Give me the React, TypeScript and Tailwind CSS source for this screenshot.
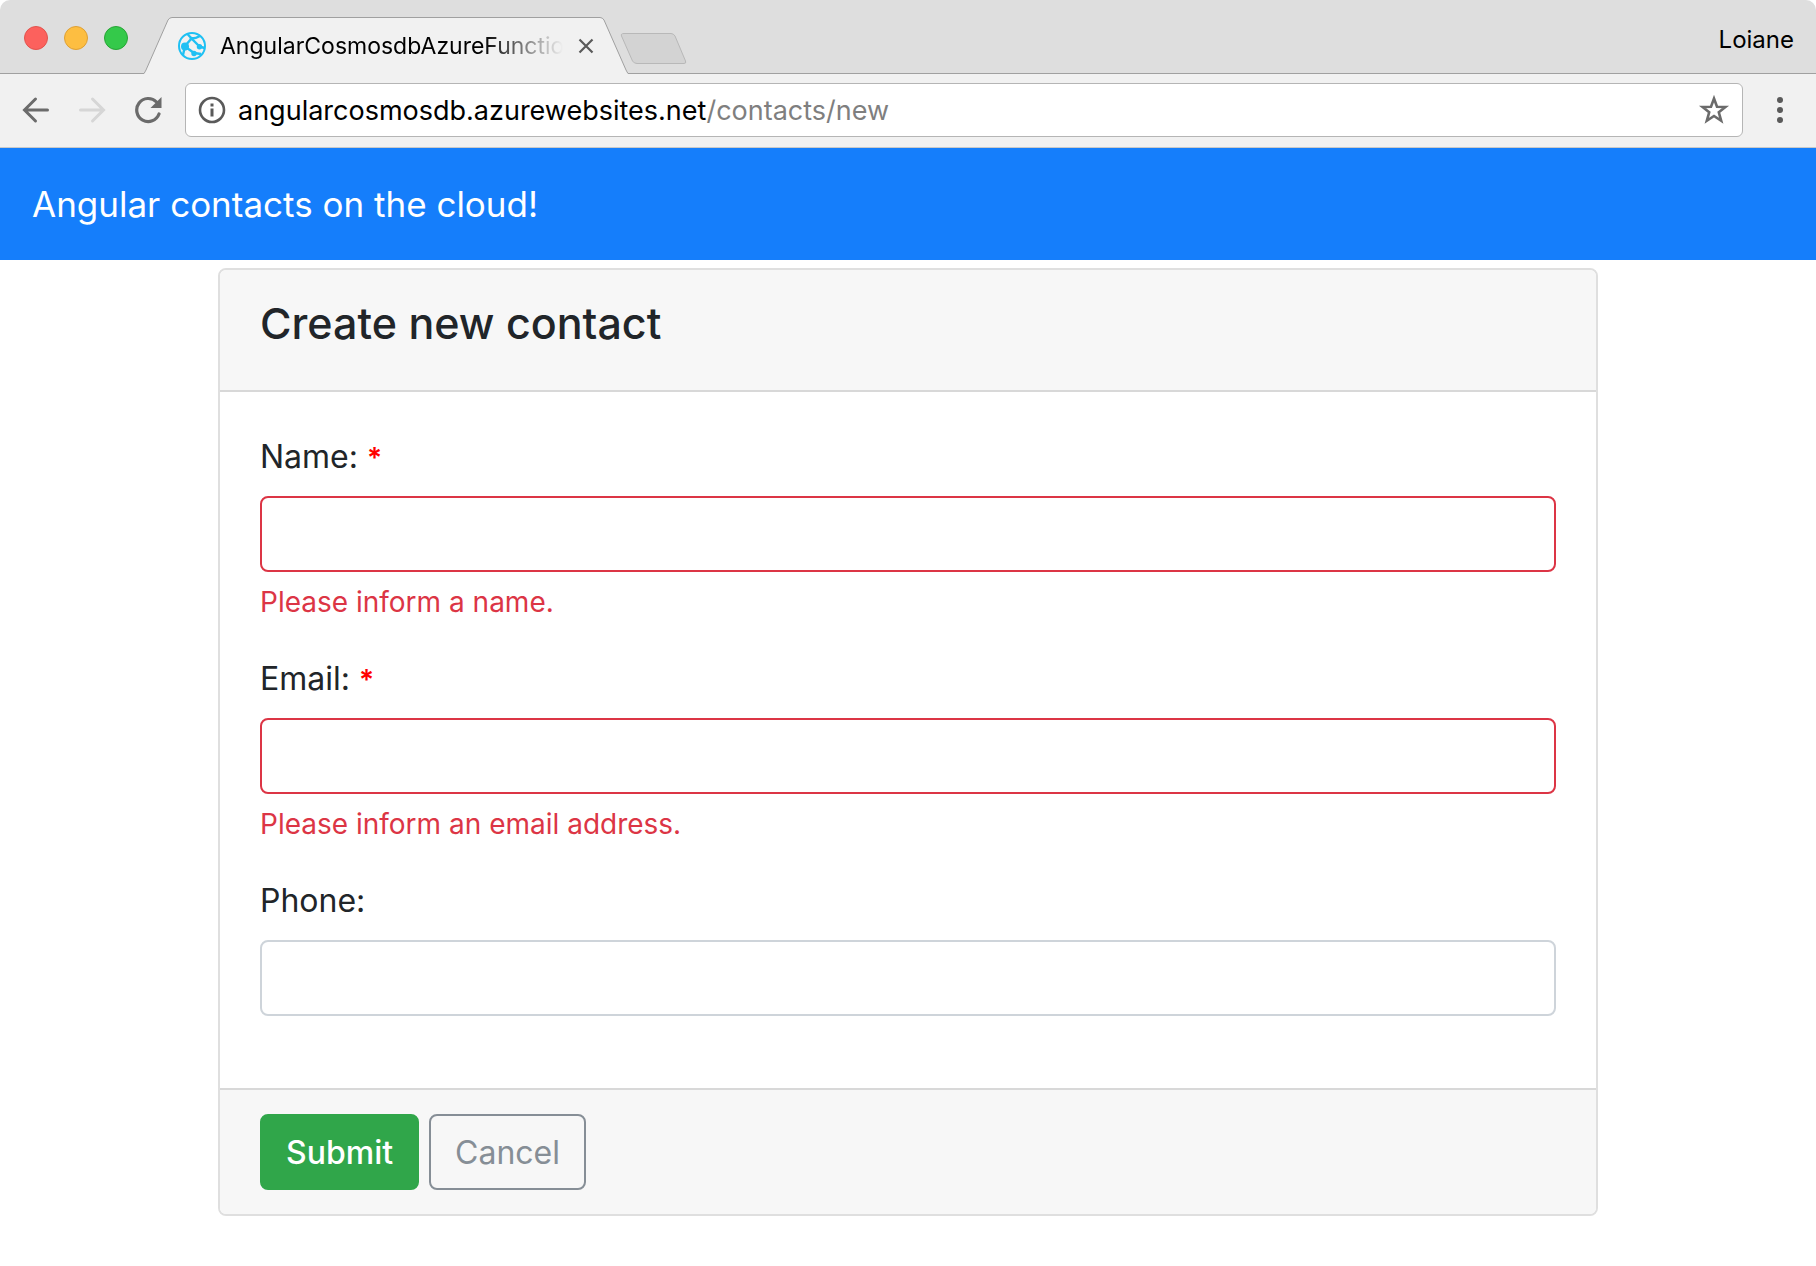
import React, { useState } from "react";

interface FieldProps {
  id: string;
  label: string;
  type?: string;
  required?: boolean;
  error?: string;
}

const HOST = "angularcosmosdb.azurewebsites.net";
const PATH = "/contacts/new";

const SiteIcon = () => (
  <svg width="28" height="30" viewBox="0 0 28 30" fill="none" className="shrink-0">
    <circle cx="14" cy="15" r="13" stroke="#1fc0f3" strokeWidth="2" />
    <path
      d="M7 15 L13.500 7.500 M7 15.500 L16 22 M7 15 L5 24 M13.500 7.500 L21.500 15.500 M13.500 7.500 L9.500 3 M13.500 7.500 Q18 7.500 22 5 M21.500 15.500 L26.500 17 M16 22 L23 23"
      stroke="#1fc0f3"
      strokeWidth="2.400"
    />
    <circle cx="7" cy="15.500" r="4" fill="#1fc0f3" />
    <circle cx="13.500" cy="7.500" r="1.800" fill="#1fc0f3" />
    <circle cx="21.500" cy="15.800" r="2.700" fill="#1fc0f3" />
    <circle cx="16" cy="22.500" r="2.700" fill="#1fc0f3" />
  </svg>
);

const TabStrip = () => (
  <div className="flex h-[74px] overflow-hidden rounded-t-[10px] bg-[#dedede]">
    <div className="flex w-36 shrink-0 items-center gap-4 border-b border-[#a0a0a0] pt-0.5 pl-6">
      <button aria-label="Close window" className="size-6 rounded-full border border-[#e2534d] bg-[#fc615d]" />
      <button aria-label="Minimize window" className="size-6 rounded-full border border-[#dea035] bg-[#fdbe41]" />
      <button aria-label="Zoom window" className="size-6 rounded-full border border-[#27a435] bg-[#34c94a]" />
    </div>
    <div className="flex shrink-0 pt-[17px]">
      <svg width="28" height="57" viewBox="0 0 28 57">
        <path d="M0 57 Q1 55 2 53 L24 3 Q25.500 0.500 28 0.500 V57 Z" fill="#f1f1f1" />
        <path d="M0 56.500 Q1 55 2 53 L24 3 Q25.500 0.500 28 0.500" fill="none" stroke="#a0a0a0" />
      </svg>
      <div className="flex w-[428px] items-center border-t border-[#a0a0a0] bg-[#f1f1f1] pl-1.5">
        <SiteIcon />
        <p className="ml-3.5 w-[350px] bg-linear-to-r from-black from-75% to-transparent to-98% bg-clip-text text-[23px] whitespace-nowrap text-transparent">
          AngularCosmosdbAzureFunctio
        </p>
        <button aria-label="Close tab" className="ml-2">
          <svg width="16" height="16" viewBox="0 0 16 16" stroke="#5a5a5a" strokeWidth="2.2">
            <path d="M1.500 1.500 L14.500 14.500 M14.500 1.500 L1.500 14.500" />
          </svg>
        </button>
      </div>
      <svg width="28" height="57" viewBox="0 0 28 57">
        <path d="M28 57 Q27 55 26 53 L4 3 Q2.500 0.500 0 0.500 V57 Z" fill="#f1f1f1" />
        <path d="M28 56.500 Q27 55 26 53 L4 3 Q2.500 0.500 0 0.500" fill="none" stroke="#a0a0a0" />
      </svg>
    </div>
    <div className="flex flex-1 items-center justify-between border-b border-[#a0a0a0] pr-[22px]">
      <button aria-label="New tab" className="-ml-2 mt-6">
        <svg width="68" height="32" viewBox="0 0 68 32">
          <path
            d="M4 0.500 H51 Q53.500 0.500 55 3 L65.500 28 Q66.500 30.500 64 30.500 H17 Q14 30.500 12.500 28 L1.500 3 Q0.500 0.500 4 0.500 Z"
            fill="#d3d3d3"
            stroke="#b8b8b8"
          />
        </svg>
      </button>
      <button className="pb-0.5 pt-2 text-2xl leading-8">Loiane</button>
    </div>
  </div>
);

const Toolbar = () => {
  const [editing, setEditing] = useState(false);

  return (
    <div className="flex h-[74px] items-center border-b border-[#c9c9c9] bg-[#f1f1f1] pr-[33px] pb-px pl-[22px]">
      <button aria-label="Back">
        <svg width="28" height="28" viewBox="0 0 28 28" fill="none" stroke="#6b6b6b" strokeWidth="3" strokeLinecap="round">
          <path d="M25.500 14 H3 M13.500 3 L2.500 14 L13.500 25" />
        </svg>
      </button>
      <button aria-label="Forward" className="ml-7" disabled>
        <svg width="28" height="28" viewBox="0 0 28 28" fill="none" stroke="#d6d6d6" strokeWidth="3" strokeLinecap="round">
          <path d="M2.500 14 H25 M14.500 3 L25.500 14 L14.500 25" />
        </svg>
      </button>
      <button aria-label="Reload" className="ml-7">
        <svg width="30" height="28" viewBox="0 0 30 28" fill="none">
          <path d="M22.500 6 A11.500 11.500 0 1 0 25 18" stroke="#6b6b6b" strokeWidth="3.200" strokeLinecap="round" />
          <path d="M27.500 1 V12 H16.500 Z" fill="#6b6b6b" />
        </svg>
      </button>
      <div className="relative ml-[21px] flex h-[54px] flex-1 items-center rounded-md border border-[#b5b5b5] bg-white px-3 text-[27px]">
        <svg width="28" height="28" viewBox="0 0 28 28" className="shrink-0">
          <circle cx="14" cy="14" r="12" fill="none" stroke="#5a5a5a" strokeWidth="2.600" />
          <path d="M12.500 7.500 h3 v3 h-3 Z M12.500 12.500 h3 v8 h-3 Z" fill="#5a5a5a" />
        </svg>
        <input
          aria-label="Address"
          className="ml-3 h-full min-w-0 flex-1 bg-transparent outline-none"
          value={editing ? HOST + PATH : ""}
          onFocus={() => setEditing(true)}
          onBlur={() => setEditing(false)}
          readOnly
        />
        {!editing && (
          <p className="pointer-events-none absolute left-[52px] pt-0.5 text-black">
            {HOST}
            <span className="text-[#7f7f7f]">{PATH}</span>
          </p>
        )}
        <button aria-label="Bookmark this page">
          <svg width="32" height="32" viewBox="0 0 32 32" fill="none" stroke="#6b6b6b" strokeWidth="2.600">
            <path d="M16 4.500 L19 12.700 L27.500 13 L20.800 18.300 L23.200 26.800 L16 22 L8.800 26.800 L11.200 18.300 L4.500 13 L13 12.700 Z" />
          </svg>
        </button>
      </div>
      <button aria-label="Menu" className="ml-[34px]">
        <svg width="6" height="28" viewBox="0 0 6 28" fill="#5a5a5a">
          <circle cx="3" cy="4" r="3" />
          <circle cx="3" cy="14" r="3" />
          <circle cx="3" cy="24" r="3" />
        </svg>
      </button>
    </div>
  );
};

const Field: React.FC<FieldProps> = ({ id, label, type = "text", required, error }) => (
  <div className="mb-[30px]">
    <label htmlFor={id} className="mb-3.5 block leading-[50px]">
      {label} {required && <span className="text-[28px] leading-none font-semibold text-[#ff0000]">*</span>}
    </label>
    <input
      id={id}
      type={type}
      className={`block h-19 w-full rounded-lg border-2 bg-white px-6 outline-none ${
        error ? "border-[#dc3545]" : "border-[#ced4da]"
      }`}
    />
    {error && <p className="mt-2 text-[28px] leading-11 text-[#dc3545]">{error}</p>}
  </div>
);

const ContactForm = () => (
  <form
    className="mx-auto mt-2 max-w-[1380px] overflow-hidden rounded-lg border-2 border-[#dfdfdf] text-[32px] text-[#212529]"
    onSubmit={(e) => e.preventDefault()}
    noValidate
  >
    <div className="border-b-2 border-[#d8d8d8] bg-[#f7f7f7] px-10 pt-6 pb-[38px]">
      <h2 className="text-[43px] leading-[58px] font-medium">Create new contact</h2>
    </div>
    <div className="px-10 pt-10 pb-[42px]">
      <Field id="name" label="Name:" required error="Please inform a name." />
      <Field id="email" label="Email:" type="email" required error="Please inform an email address." />
      <Field id="phone" label="Phone:" type="tel" />
    </div>
    <div className="flex gap-2.5 border-t-2 border-[#d8d8d8] bg-[#f7f7f7] px-10 py-6">
      <button type="submit" className="h-19 rounded-lg border-2 border-[#30a64a] bg-[#30a64a] px-6 pt-0.5 font-medium text-white">
        Submit
      </button>
      <button type="button" className="h-19 rounded-lg border-2 border-[#868e96] px-6 pt-0.5 text-[#868e96]">
        Cancel
      </button>
    </div>
  </form>
);

const App = () => (
  <div className="min-h-screen bg-white font-['Inter',sans-serif] text-black">
    <header>
      <TabStrip />
      <Toolbar />
    </header>
    <nav className="flex h-28 items-center bg-[#157efb] px-8">
      <a href="#" className="text-[35px] text-white">
        Angular contacts on the cloud!
      </a>
    </nav>
    <main>
      <ContactForm />
    </main>
  </div>
);

export default App;
